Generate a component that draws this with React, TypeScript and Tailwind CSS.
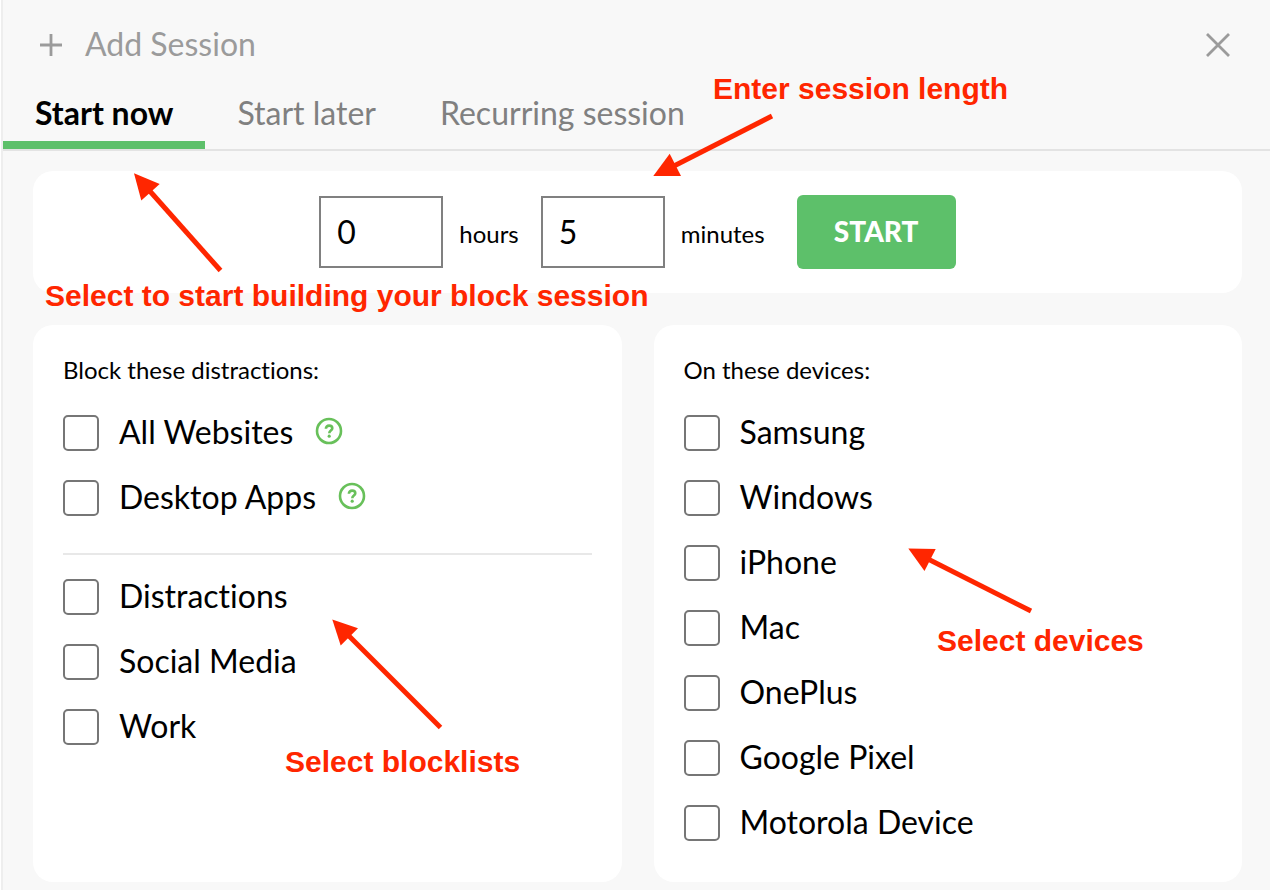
import { useState } from "react";

interface Item {
  id: string
  label: string
  help?: boolean
}

const tabs = ["Start now", "Start later", "Recurring session"];

const categories: Item[] = [
  { id: "all-websites", label: "All Websites", help: true },
  { id: "desktop-apps", label: "Desktop Apps", help: true },
];

const blocklists: Item[] = [
  { id: "distractions", label: "Distractions" },
  { id: "social-media", label: "Social Media" },
  { id: "work", label: "Work" },
];

const devices: Item[] = [
  { id: "samsung", label: "Samsung" },
  { id: "windows", label: "Windows" },
  { id: "iphone", label: "iPhone" },
  { id: "mac", label: "Mac" },
  { id: "oneplus", label: "OnePlus" },
  { id: "google-pixel", label: "Google Pixel" },
  { id: "motorola", label: "Motorola Device" },
];

function HelpIcon() {
  return (
    <svg width="28" height="28" viewBox="0 0 28 28" fill="none" stroke="#68c05a" aria-hidden="true">
      <circle cx="14" cy="14" r="12" strokeWidth="2.6" />
      <path d="M10.900 11.700c0-2 1.300-3.100 3.200-3.100s3.200 1.100 3.200 2.700c0 2.300-3 2.300-3 4.900" strokeWidth="2.6" />
      <circle cx="14.200" cy="19.200" r="1.600" fill="#68c05a" stroke="none" />
    </svg>
  );
}

function CheckList({ items }: { items: Item[] }) {
  return (
    <ul>
      {items.map((item) => (
        <li key={item.id} className="flex items-center h-[65px]">
          <input
            type="checkbox"
            id={item.id}
            className="appearance-none shrink-0 size-9 border-2 border-[#767676] rounded-[5px] bg-white checked:bg-[#5dc06a]"
          />
          <label htmlFor={item.id} className="pl-5 pb-0.5 text-[32px] leading-10">{item.label}</label>
          {item.help && (
            <button type="button" aria-label={`About ${item.label}`} className="ml-[22px] pb-1">
              <HelpIcon />
            </button>
          )}
        </li>
      ))}
    </ul>
  );
}

// Red callouts laid over the form
function Annotations() {
  return (
    <div className="absolute inset-y-0 right-0 -left-[3px] pointer-events-none overflow-hidden font-['Liberation_Sans',Arial,sans-serif] text-[30px] leading-9 font-bold text-[#ff2600] whitespace-nowrap">
      <svg width="1270" height="890" className="absolute top-0 left-0" fill="#ff2600" stroke="#ff2600" aria-hidden="true">
        <g strokeWidth="5">
          <path d="M220.500 270.500 L148 189" />
          <path d="M772 116 L670 168" />
          <path d="M440.500 727.500 L346 633" />
          <path d="M1031 611 L922 556" />
        </g>
        <g stroke="none">
          <path d="M134 173.300 L159.700 184 L141.300 200.400Z" />
          <path d="M653.300 176 L669.700 153.700 L681 176Z" />
          <path d="M332.300 619.600 L358 628.200 L340.700 645.600Z" />
          <path d="M908.300 548.400 L935.700 548.900 L924.500 571Z" />
        </g>
      </svg>
      <p className="absolute left-[713px] top-[71px]">Enter session length</p>
      <p className="absolute left-[45px] top-[278px]">Select to start building your block session</p>
      <p className="absolute left-[285px] top-[744px]">Select blocklists</p>
      <p className="absolute left-[937px] top-[623px]">Select devices</p>
    </div>
  );
}

export default function App() {
  const [activeTab, setActiveTab] = useState("Start now");
  const [hours, setHours] = useState("0");
  const [minutes, setMinutes] = useState("5");

  return (
    <div className="relative ml-px min-h-screen bg-[#f8f8f8] border-l-2 border-[#eeeeee] text-black font-[Lato,sans-serif] [font-variant-ligatures:none]">
      <header className="flex items-center justify-between h-[90px] pl-9 pr-10">
        <div className="flex items-center gap-[22px] text-[#9b9b9b]">
          <svg width="24" height="24" viewBox="0 0 24 24" stroke="currentColor" strokeWidth="2.8" aria-hidden="true">
            <path d="M1 12h22M12 1v22" />
          </svg>
          <h1 className="pb-0.5 text-[32px] leading-10">Add Session</h1>
        </div>
        <button type="button" aria-label="Close" className="text-[#9b9b9b]">
          <svg width="24" height="24" viewBox="0 0 24 24" stroke="currentColor" strokeWidth="2.8" aria-hidden="true">
            <path d="M1 1l22 22M23 1L1 23" />
          </svg>
        </button>
      </header>

      <div role="tablist" className="flex border-b-2 border-[#e3e3e3]">
        {tabs.map((tab) => (
          <button
            key={tab}
            type="button"
            role="tab"
            aria-selected={tab === activeTab}
            onClick={() => setActiveTab(tab)}
            className={
              tab === activeTab
                ? "px-8 pt-[3px] pb-2 text-[32px] leading-10 font-bold text-black border-b-8 border-[#5dc06a]"
                : "px-8 pt-[3px] pb-2 text-[32px] leading-10 text-[#808080] border-b-8 border-transparent"
            }
          >
            {tab}
          </button>
        ))}
      </div>

      <main className="flex flex-col gap-8 pt-5 pl-[30px] pr-7 pb-2">
        <form
          onSubmit={(e) => e.preventDefault()}
          className="flex items-center justify-center h-[122px] bg-white rounded-[20px]"
        >
          <input
            type="text"
            id="hours"
            value={hours}
            onChange={(e) => setHours(e.target.value)}
            className="w-[124px] h-[72px] px-4 pb-0.5 border-2 border-[#808080] text-[32px] bg-white"
          />
          <label htmlFor="hours" className="pl-4 pr-[22px] pt-1 text-2xl">hours</label>
          <input
            type="text"
            id="minutes"
            value={minutes}
            onChange={(e) => setMinutes(e.target.value)}
            className="w-[124px] h-[72px] px-4 pb-0.5 border-2 border-[#808080] text-[32px] bg-white"
          />
          <label htmlFor="minutes" className="pl-4 pr-8 pt-1 text-2xl">minutes</label>
          <button type="submit" className="w-[159px] h-[74px] pb-0.5 rounded-md bg-[#5dc06a] text-white text-[28px] font-black">
            START
          </button>
        </form>

        <div className="grid grid-cols-2 gap-8">
          <section className="bg-white rounded-[20px] px-[30px] pt-[31px] pb-[27px]">
            <h2 className="mb-4 text-2xl leading-7">Block these distractions:</h2>
            <CheckList items={categories} />
            <hr className="mt-[23px] mb-[9px] border-t-2 border-[#e8e8e8]" />
            <CheckList items={blocklists} />
          </section>
          <section className="bg-white rounded-[20px] px-[30px] pt-[31px] pb-[27px]">
            <h2 className="mb-4 text-2xl leading-7">On these devices:</h2>
            <CheckList items={devices} />
          </section>
        </div>
      </main>

      <Annotations />
    </div>
  );
}
